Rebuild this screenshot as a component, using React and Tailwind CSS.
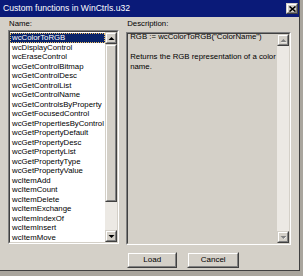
import React from 'react'

const ITEMS = [
  'wcColorToRGB',
  'wcDisplayControl',
  'wcEraseControl',
  'wcGetControlBitmap',
  'wcGetControlDesc',
  'wcGetControlList',
  'wcGetControlName',
  'wcGetControlsByProperty',
  'wcGetFocusedControl',
  'wcGetPropertiesByControl',
  'wcGetPropertyDefault',
  'wcGetPropertyDesc',
  'wcGetPropertyList',
  'wcGetPropertyType',
  'wcGetPropertyValue',
  'wcItemAdd',
  'wcItemCount',
  'wcItemDelete',
  'wcItemExchange',
  'wcItemIndexOf',
  'wcItemInsert',
  'wcItemMove',
]

// classic win32 3d edges
function Raised({ className = '', children }) {
  return (
    <div className={`border border-t-[#d4d0c8] border-l-[#d4d0c8] border-r-[#404040] border-b-[#404040] bg-[#d4d0c8] ${className}`}>
      <div className="w-full h-full border border-t-white border-l-white border-r-[#808080] border-b-[#808080] flex items-center justify-center">
        {children}
      </div>
    </div>
  )
}

function Sunken({ className = '', children }) {
  return (
    <div className={`border border-t-[#808080] border-l-[#808080] border-r-white border-b-white ${className}`}>
      <div className="w-full h-full border border-t-[#404040] border-l-[#404040] border-r-[#d4d0c8] border-b-[#d4d0c8] flex">
        {children}
      </div>
    </div>
  )
}

function Arrow({ up, disabled }) {
  return (
    <svg width="7" height="5" viewBox="0 0 7 5">
      {disabled && (
        <polygon points={up ? '1,4.5 4,1.5 7,4.5' : '1,1.5 4,4.5 7,1.5'} fill="#ffffff" />
      )}
      <polygon
        points={up ? '0.5,4 3.5,1 6.5,4' : '0.5,1 3.5,4 6.5,1'}
        fill={disabled ? '#808080' : '#000000'}
      />
    </svg>
  )
}

function CloseButton() {
  return (
    <Raised className="w-[12px] h-[11px]">
      <svg width="7" height="6" viewBox="0 0 7 6">
        <path d="M0.5 0.5 L6.5 5.5 M6.5 0.5 L0.5 5.5" stroke="#000" strokeWidth="1.6" />
      </svg>
    </Raised>
  )
}

function NameList() {
  return (
    <Sunken className="h-[214px]">
      <div className="flex-1 bg-white pt-[1px]">
        {ITEMS.map((name, i) => (
          <div
            key={name}
            className={`h-[9.5px] leading-[9.5px] pl-[2px] text-[7.8px] whitespace-nowrap ${
              i === 0 ? 'bg-[#0a246a] text-white outline outline-1 outline-dotted outline-[#f0c060] -outline-offset-1' : 'text-black'
            }`}
          >
            {name}
          </div>
        ))}
      </div>
      <div className="w-[12px] flex flex-col">
        <Raised className="h-[12px] w-[12px]">
          <Arrow up />
        </Raised>
        <Raised className="h-[158px] w-[12px]" />
        <div className="flex-1 bg-[#ece9e4]" />
        <Raised className="h-[12px] w-[12px]">
          <Arrow />
        </Raised>
      </div>
    </Sunken>
  )
}

function DescriptionBox() {
  return (
    <Sunken className="mt-[2px] h-[213px]">
      <div className="flex-1 pl-[2px] text-[7.8px] leading-[10px] -mt-[2px]">
        <div>RGB := wcColorToRGB("ColorName")</div>
        <div className="h-[10px]" />
        <div>Returns the RGB representation of a color</div>
        <div>name.</div>
      </div>
      <div className="w-[12px] flex flex-col bg-[#ece9e4]">
        <Raised className="h-[12px] w-[12px]">
          <Arrow up disabled />
        </Raised>
        <div className="flex-1" />
        <Raised className="h-[12px] w-[12px]">
          <Arrow disabled />
        </Raised>
      </div>
    </Sunken>
  )
}

function PushButton({ label, width }) {
  return (
    <Raised className={`h-[16px] ${width}`}>
      <span className="text-[8px] leading-none">{label}</span>
    </Raised>
  )
}

export default function App() {
  return (
    <div className="w-[303px] h-[276px] bg-[#a9a59d] font-['Liberation_Sans',Arial,sans-serif] text-black overflow-hidden">
      <div className="w-[300px] h-[271px] bg-[#d4d0c8] border-r border-b border-r-[#404040] border-b-[#404040] flex flex-col">
        <div className="h-[17px] bg-[#0a1a78] flex items-center justify-between pl-[3px] pr-[1px]">
          <span className="text-white text-[8.6px] leading-none">Custom functions in WinCtrls.u32</span>
          <CloseButton />
        </div>

        <div className="flex px-[8px] gap-[7px]">
          <div className="w-[112px] flex flex-col">
            <div className="h-[13px] flex items-center pl-[1px] text-[7.8px]">Name:</div>
            <NameList />
          </div>

          <div className="w-[166px] flex flex-col">
            <div className="h-[13px] flex items-center pl-[1px] text-[7.8px]">Description:</div>
            <DescriptionBox />
            <div className="mt-[7px] flex gap-[10px] pl-[1px]">
              <PushButton label="Load" width="w-[50px]" />
              <PushButton label="Cancel" width="w-[52px]" />
            </div>
          </div>
        </div>
      </div>
    </div>
  )
}
